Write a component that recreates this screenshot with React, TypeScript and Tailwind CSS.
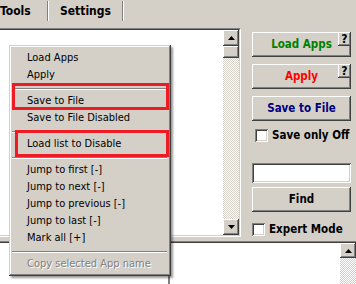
import React from "react";

const raised =
  "bg-[#d4d0c8] shadow-[inset_-1px_-1px_#404040,inset_1px_1px_#fff,inset_-2px_-2px_#808080,inset_2px_2px_#d4d0c8]";

const sunken =
  "shadow-[inset_1px_1px_#808080,inset_-1px_-1px_#fff,inset_2px_2px_#404040,inset_-2px_-2px_#d4d0c8]";

const Arrow: React.FC<{ down?: boolean }> = ({ down }) => (
  <svg width="7" height="4" viewBox="0 0 7 4">
    {down ? <path d="M0 0h7L3.5 4z" fill="#000" /> : <path d="M3.5 0L7 4H0z" fill="#000" />}
  </svg>
);

const Checkbox: React.FC = () => (
  <div className={`w-[13px] h-[13px] bg-white shrink-0 ${sunken}`} />
);

const Separator: React.FC = () => (
  <div className="h-[9px] pt-[4px] ml-[3px] mr-[4px]">
    <div className="border-t border-t-[#808080] border-b border-b-white" />
  </div>
);

const MenuItem: React.FC<{ label: string; disabled?: boolean }> = ({ label, disabled }) => (
  <div
    className={
      disabled
        ? "h-[17px] flex items-center pl-[18px] text-[#808080] [text-shadow:1px_1px_0_#fff]"
        : "h-[17px] flex items-center pl-[18px] text-black"
    }
  >
    {label}
  </div>
);

const HelpBtn: React.FC = () => (
  <div className={`absolute right-0 top-0 w-[13px] h-[14px] flex items-center justify-center text-[12px] text-black font-bold leading-none ${raised}`}>
    ?
  </div>
);

export default function App() {
  return (
    <div className="relative w-[356px] h-[284px] overflow-hidden bg-[#d4d0c8] font-['DejaVu_Sans_Condensed','DejaVu_Sans',sans-serif] text-[11px] text-black select-none">
      {/* tabs */}
      <div className="h-[28px] flex items-start">
        <div className="h-[21px] flex items-center font-bold text-[12px]">
          <span className="w-[47px]">Tools</span>
          <div className="w-[2px] h-[20px] border-l border-l-[#808080] border-r border-r-white" />
          <span className="pl-[11px] w-[73px]">Settings</span>
          <div className="w-[2px] h-[20px] border-l border-l-[#808080] border-r border-r-white" />
        </div>
      </div>

      {/* middle */}
      <div className="h-[213px] flex items-start">
        <div className="-ml-[2px] w-[243px] h-[209px] flex border-t border-l border-t-[#808080] border-l-[#808080] border-r border-b border-r-white border-b-white">
          <div className="flex-1 flex border-t border-l border-t-[#404040] border-l-[#404040] border-r border-b border-r-[#d4d0c8] border-b-[#d4d0c8]">
            <div className="flex-1 bg-white" />
            <div className="w-[16px] flex flex-col">
              <div className={`h-[16px] flex items-center justify-center ${raised}`}>
                <Arrow />
              </div>
              <div className={`h-[12px] ${raised}`} />
              <div className="flex-1 bg-[repeating-conic-gradient(#d4d0c8_0_25%,#fff_0_50%)] bg-[length:2px_2px]" />
              <div className={`h-[16px] flex items-center justify-center ${raised}`}>
                <Arrow down />
              </div>
            </div>
          </div>
        </div>

        <div className="ml-[11px] mt-[4px] w-[99px] flex flex-col font-bold text-[11.5px] whitespace-nowrap">
          <div className={`relative h-[25px] flex items-center justify-center text-[#008000] ${raised}`}>
            Load Apps
            <HelpBtn />
          </div>
          <div className={`relative mt-[7px] h-[25px] flex items-center justify-center text-[#ff0000] ${raised}`}>
            Apply
            <HelpBtn />
          </div>
          <div className={`mt-[7px] h-[25px] flex items-center justify-center text-[#000080] ${raised}`}>
            Save to File
          </div>
          <div className="mt-[8px] h-[13px] pl-[3px] flex items-center gap-[4px]">
            <Checkbox />
            <span>Save only Off</span>
          </div>
          <div className={`mt-[21px] h-[20px] bg-white ${sunken}`} />
          <div className={`mt-[4px] h-[25px] flex items-center justify-center ${raised}`}>
            Find
          </div>
          <div className="mt-[11px] h-[13px] flex items-center gap-[4px]">
            <Checkbox />
            <span>Expert Mode</span>
          </div>
        </div>
      </div>

      {/* bottom list */}
      <div className="h-[43px] flex border-t border-t-[#808080]">
        <div className="flex-1 flex border-t border-t-[#404040]">
          <div className="flex-1 bg-white flex">
            <div className="w-[170px] border-r-2 border-r-[#808080]" />
          </div>
          <div className="w-[16px] flex flex-col">
            <div className={`h-[15px] flex items-center justify-center ${raised}`}>
              <Arrow />
            </div>
            <div className="flex-1 bg-[repeating-conic-gradient(#d4d0c8_0_25%,#fff_0_50%)] bg-[length:2px_2px]" />
          </div>
        </div>
      </div>

      {/* context menu */}
      <div className="absolute left-[9px] top-[45px] w-[162px] pt-[5px] pb-[3px] bg-[#d4d0c8] shadow-[inset_-1px_-1px_#404040,inset_1px_1px_#d4d0c8,inset_-2px_-2px_#808080,inset_2px_2px_#fff,2px_2px_2px_rgba(0,0,0,0.4)]">
        <MenuItem label="Load Apps" />
        <MenuItem label="Apply" />
        <Separator />
        <MenuItem label="Save to File" />
        <MenuItem label="Save to File Disabled" />
        <Separator />
        <MenuItem label="Load list to Disable" />
        <Separator />
        <MenuItem label="Jump to first [-]" />
        <MenuItem label="Jump to next [-]" />
        <MenuItem label="Jump to previous [-]" />
        <MenuItem label="Jump to last [-]" />
        <MenuItem label="Mark all [+]" />
        <Separator />
        <MenuItem label="Copy selected App name" disabled />

        <div className="absolute left-[3px] top-[38px] w-[157px] h-[27px] border-[3px] border-[#ed1c24]" />
        <div className="absolute left-[6px] top-[85px] w-[154px] h-[27px] border-[3px] border-[#ed1c24]" />
      </div>
    </div>
  );
}
